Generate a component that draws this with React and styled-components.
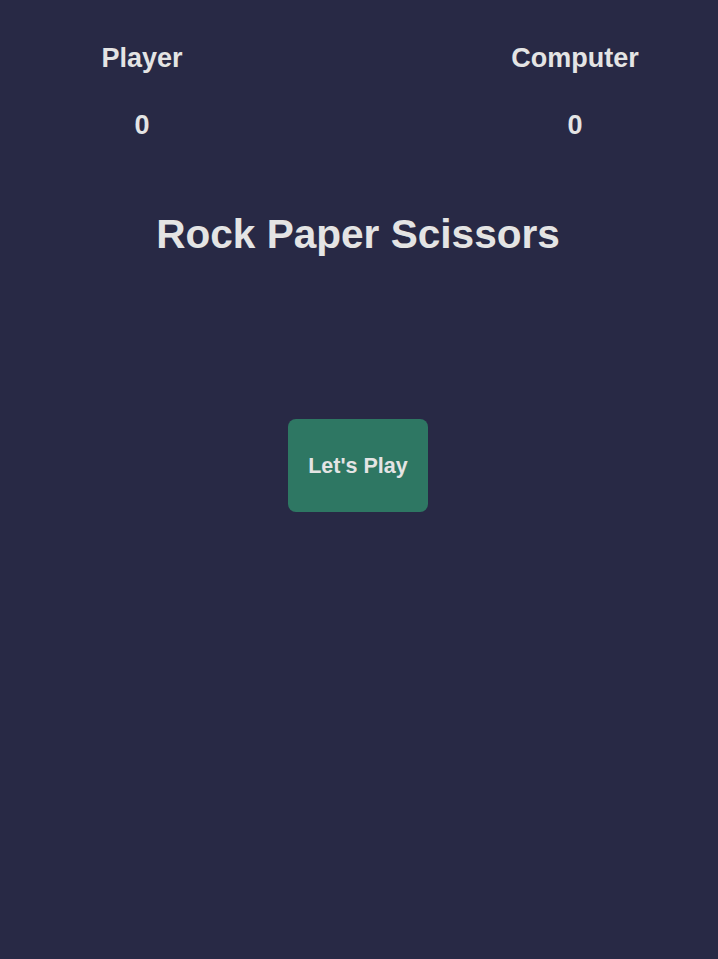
import React from "react";
import styled, { createGlobalStyle } from "styled-components";

const Global = createGlobalStyle`
  html, body { margin: 0; padding: 0; background: #282945; }
  body { font-family: "Liberation Sans", Arial, sans-serif; color: #e4e4e4; }
`;

const Page = styled.div`
  min-height: 959px;
  background: #282945;
  display: flex;
  flex-direction: column;
  align-items: stretch;
  padding-top: 43px;
  box-sizing: border-box;
`;

const Scoreboard = styled.div`
  display: flex;
  justify-content: space-between;
  padding: 0 63px 0 62px;
`;

const ScoreColumn = styled.div`
  width: 160px;
  display: flex;
  flex-direction: column;
  align-items: center;
  font-weight: 700;
  font-size: 27px;
  line-height: 31px;
`;

const Label = styled.div``;

const Score = styled.div`
  margin-top: 36px;
`;

const Title = styled.h1`
  margin: 70px 0 0;
  padding-right: 2px;
  text-align: center;
  font-size: 40.6px;
  line-height: 46px;
  font-weight: 700;
`;

const Stage = styled.div`
  display: flex;
  justify-content: center;
  margin-top: 162px;
  padding-right: 2px;
`;

const PlayButton = styled.button`
  width: 140px;
  height: 93px;
  background: #2e7763;
  color: #e4e4e4;
  border: none;
  border-radius: 8px;
  font-family: "Liberation Sans", Arial, sans-serif;
  font-weight: 700;
  font-size: 21.5px;
  line-height: 25px;
  cursor: pointer;
  padding: 2px 0 0;
`;

export default function App() {
  return (
    <>
      <Global />
      <Page>
        <Scoreboard>
          <ScoreColumn>
            <Label>Player</Label>
            <Score>0</Score>
          </ScoreColumn>
          <ScoreColumn>
            <Label>Computer</Label>
            <Score>0</Score>
          </ScoreColumn>
        </Scoreboard>
        <Title>Rock Paper Scissors</Title>
        <Stage>
          <PlayButton>Let's Play</PlayButton>
        </Stage>
      </Page>
    </>
  );
}
